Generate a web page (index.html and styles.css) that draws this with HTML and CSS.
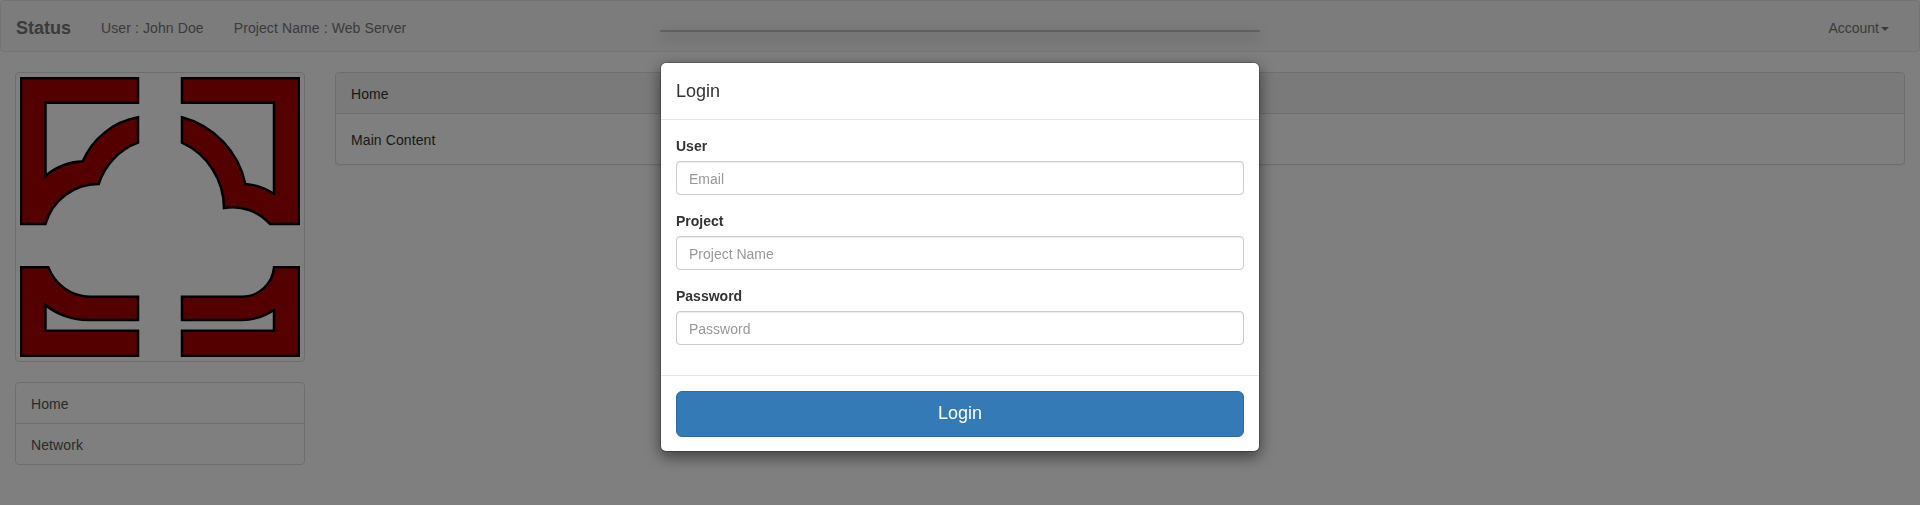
FILE: index.html
```html
<!DOCTYPE html>
<html lang="en">
<head>
<meta charset="utf-8">
<title>Status</title>
<link rel="stylesheet" href="styles.css">
</head>
<body>
<nav class="navbar">
  <a class="brand">Status</a>
  <a class="nav-link">User : John Doe</a>
  <a class="nav-link">Project Name : Web Server</a>
  <a class="nav-link nav-right">Account<span class="caret"></span></a>
</nav>
<div class="row">
  <aside>
    <div class="thumbnail">
      <svg class="logo" viewBox="20 77 280 280" width="280" height="280">
        <g fill="#aa0000" stroke="#000" stroke-width="2.5">
          <path d="M21 78.3H138V102.7H45.5V176A60 60 0 0 1 82.7 161.3A75 75 0 0 1 138 117.3V142.7A65 65 0 0 0 98.7 184A55 55 0 0 0 45.5 224H21Z"/>
          <path d="M182 78.3H299V224H270A50 50 0 0 0 224 208A72 72 0 0 0 182 142.7V117.3A88 88 0 0 1 245.3 184A60 60 0 0 1 274 194V102.7H182Z"/>
          <path d="M21 267.3H48.3A45 45 0 0 0 90 296.7H138V320H90A70 70 0 0 1 45.5 305.3V330.7H138V356H21Z"/>
          <path d="M182 296.7H241.7A32 32 0 0 0 274 267.3H299V356H182V330.7H274V310A60 60 0 0 1 241.7 320H182Z"/>
        </g>
      </svg>
    </div>
    <div class="list-group">
      <a class="list-item">Home</a>
      <a class="list-item">Network</a>
    </div>
  </aside>
  <main class="panel">
    <div class="panel-heading">Home</div>
    <div class="panel-body">Main Content</div>
  </main>
</div>
<div class="backdrop"></div>
<div class="modal-layer">
  <div class="modal-ghost"></div>
  <form class="modal">
    <div class="modal-header"><h4 class="modal-title">Login</h4></div>
    <div class="modal-body">
      <div class="form-group">
        <label class="label" for="user">User</label>
        <input class="input" id="user" type="text" placeholder="Email">
      </div>
      <div class="form-group">
        <label class="label" for="project">Project</label>
        <input class="input" id="project" type="text" placeholder="Project Name">
      </div>
      <div class="form-group">
        <label class="label" for="password">Password</label>
        <input class="input" id="password" type="password" placeholder="Password">
      </div>
    </div>
    <div class="modal-footer"><button class="btn" type="button">Login</button></div>
  </form>
</div>
</body>
</html>
```
FILE: styles.css
```css
* { box-sizing: border-box; }
html, body { height: 100%; }
body {
  margin: 0;
  background: #fff;
  color: #333;
  font: 14px/20px "Liberation Sans", Arial, sans-serif;
  overflow: hidden;
}
.navbar {
  display: flex;
  align-items: center;
  height: 52px;
  margin-bottom: 20px;
  padding: 0 15px;
  background: #f8f8f8;
  border: 1px solid #e7e7e7;
  border-radius: 4px;
  color: #777;
}
.brand {
  padding: 17px 15px 13px 0;
  font-size: 18px;
  font-weight: 700;
}
.nav-link {
  padding: 17px 15px 13px;
  letter-spacing: .1px;
}
.nav-right { margin-left: auto; letter-spacing: 0; }
.caret {
  display: inline-block;
  width: 0;
  height: 0;
  margin-left: 2px;
  vertical-align: middle;
  border-top: 4px solid #777;
  border-left: 4px solid transparent;
  border-right: 4px solid transparent;
}
.row {
  display: grid;
  grid-template-columns: 290px 1fr;
  gap: 30px;
  align-items: start;
  padding: 0 15px;
}
.thumbnail {
  padding: 4px;
  margin-bottom: 20px;
  background: #fff;
  border: 1px solid #ddd;
  border-radius: 4px;
}
.logo { display: block; }
.list-group { display: flex; flex-direction: column; }
.list-item {
  padding: 11px 15px 9px;
  margin-bottom: -1px;
  background: #fff;
  border: 1px solid #ddd;
  color: #555;
  letter-spacing: .1px;
}
.list-item:first-child { border-radius: 4px 4px 0 0; }
.list-item:last-child { border-radius: 0 0 4px 4px; margin-bottom: 0; }
.panel {
  background: #fff;
  border: 1px solid #ddd;
  border-radius: 4px;
  box-shadow: 0 1px 1px rgba(0,0,0,.05);
  letter-spacing: .1px;
}
.panel-heading {
  padding: 11px 15px 9px;
  background: #f5f5f5;
  border-bottom: 1px solid #ddd;
  border-radius: 3px 3px 0 0;
}
.panel-body { padding: 16px 15px 14px; }
.backdrop {
  position: fixed;
  inset: 0;
  background: rgba(0,0,0,.5);
}
.modal-layer {
  position: fixed;
  inset: 0;
  display: flex;
  flex-direction: column;
  align-items: center;
  gap: 30px;
  padding-top: 30px;
}
.modal-ghost, .modal {
  width: 600px;
  background: #fff;
  background-clip: padding-box;
  border: 1px solid rgba(0,0,0,.2);
  border-radius: 6px;
  box-shadow: 0 5px 15px rgba(0,0,0,.5);
}
.modal-ghost { height: 2px; flex: none; }
.modal { flex: none; height: 390px; }
.modal-header {
  padding: 16px 15px 14px;
  border-bottom: 1px solid #e5e5e5;
}
.modal-title {
  margin: 0;
  font-size: 18px;
  font-weight: 500;
  line-height: 25.7px;
}
.modal-body { padding: 15px; }
.form-group { margin-bottom: 15px; }
.label {
  display: block;
  padding-top: 1px;
  margin-bottom: 5px;
  font-weight: 700;
}
.input {
  display: block;
  width: 100%;
  height: 34px;
  padding: 7px 12px 5px;
  color: #555;
  background: #fff;
  border: 1px solid #ccc;
  border-radius: 4px;
  box-shadow: inset 0 1px 1px rgba(0,0,0,.075);
  font: inherit;
}
.input::placeholder { color: #999; opacity: 1; }
.modal-footer {
  padding: 15px;
  border-top: 1px solid #e5e5e5;
}
.btn {
  display: block;
  width: 100%;
  height: 46px;
  padding: 10px 16px;
  color: #fff;
  background: #337ab7;
  border: 1px solid #2e6da4;
  border-radius: 6px;
  font: 18px/1.33 "Liberation Sans", Arial, sans-serif;
}
```
